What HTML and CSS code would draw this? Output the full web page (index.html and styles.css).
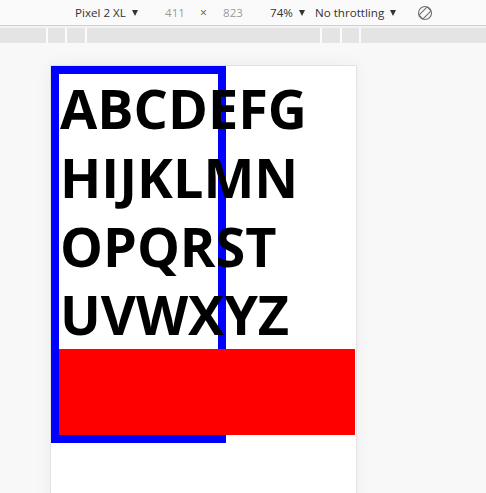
FILE: index.html
```html
<!DOCTYPE html>
<html>
<head>
<meta charset="utf-8">
<link rel="stylesheet" href="styles.css">
</head>
<body>
<div class="toolbar">
  <span class="item dark">Pixel 2 XL<i class="tri"></i></span>
  <span class="item gray">411</span>
  <span class="item times">×</span>
  <span class="item gray">823</span>
  <span class="item dark">74%<i class="tri"></i></span>
  <span class="item dark">No throttling<i class="tri"></i></span>
  <span class="item icon">
    <svg width="16" height="16" viewBox="0 0 16 16">
      <circle cx="8" cy="8" r="6.5" fill="none" stroke="#6e6e6e" stroke-width="1.1"/>
      <rect x="5.3" y="2.2" width="5.4" height="11.6" rx="1" fill="none" stroke="#6e6e6e" stroke-width="1.1" transform="rotate(45 8 8)"/>
    </svg>
  </span>
</div>
<div class="gap"></div>
<div class="ruler">
  <div class="seg w46"></div>
  <div class="seg w17"></div>
  <div class="seg w18"></div>
  <div class="seg w233"></div>
  <div class="seg w18"></div>
  <div class="seg w17"></div>
  <div class="seg rest"></div>
</div>
<div class="stage">
  <div class="device">
    <div class="box">
      <p class="letters">ABCDEFG HIJKLMN OPQRST UVWXYZ</p>
      <div class="red"></div>
    </div>
  </div>
</div>
</body>
</html>
```
FILE: styles.css
```css
html, body {
  margin: 0;
  padding: 0;
}
body {
  width: 486px;
  height: 493px;
  overflow: hidden;
  background: #f8f8f8;
  font-family: "Open Sans", "Noto Sans", sans-serif;
}
.toolbar {
  height: 26px;
  background: #fafafa;
  border-bottom: 1px solid #cfcfcf;
  box-sizing: border-box;
  display: grid;
  grid-template-columns: 75px 90px 35px 23px 47px 45px 103px 1fr;
  align-items: center;
  font-size: 11.6px;
}
.toolbar .item:first-child {
  grid-column: 2;
}
.item {
  white-space: nowrap;
  line-height: 26px;
}
.dark { color: #333; }
.gray { color: #9a9a9a; }
.times { color: #555; font-size: 12px; }
.tri {
  display: inline-block;
  width: 0;
  height: 0;
  border-left: 3.5px solid transparent;
  border-right: 3.5px solid transparent;
  border-top: 6px solid #333;
  margin-left: 6px;
  vertical-align: 1px;
}
.icon {
  display: flex;
  align-items: center;
  height: 26px;
}
.icon svg {
  display: block;
  margin-left: -1px;
}
.gap {
  height: 2px;
  background: #f3f3f3;
}
.ruler {
  height: 15px;
  display: flex;
  gap: 2px;
  background: #fbfbfb;
}
.seg { background: #e4e4e4; }
.w46 { width: 46px; }
.w17 { width: 17px; }
.w18 { width: 18px; }
.w233 { width: 233px; }
.rest { flex: 1; }
.stage {
  padding: 23px 0 0 51px;
  background: #f8f8f8;
}
.device {
  width: 305px;
  height: 440px;
  background: #fff;
  box-shadow: 0 0 0 1px #e2e2e2, 0 0 18px rgba(0, 0, 0, 0.06);
}
.box {
  width: 159px;
  border: 8px solid #0000ff;
}
.letters {
  margin: 0;
  font-family: "Open Sans", "Noto Sans", sans-serif;
  font-weight: 700;
  font-size: 54px;
  line-height: 68.75px;
  color: #000;
  padding-left: 1px;
}
.red {
  width: 296px;
  height: 86px;
  background: #ff0000;
}
```
